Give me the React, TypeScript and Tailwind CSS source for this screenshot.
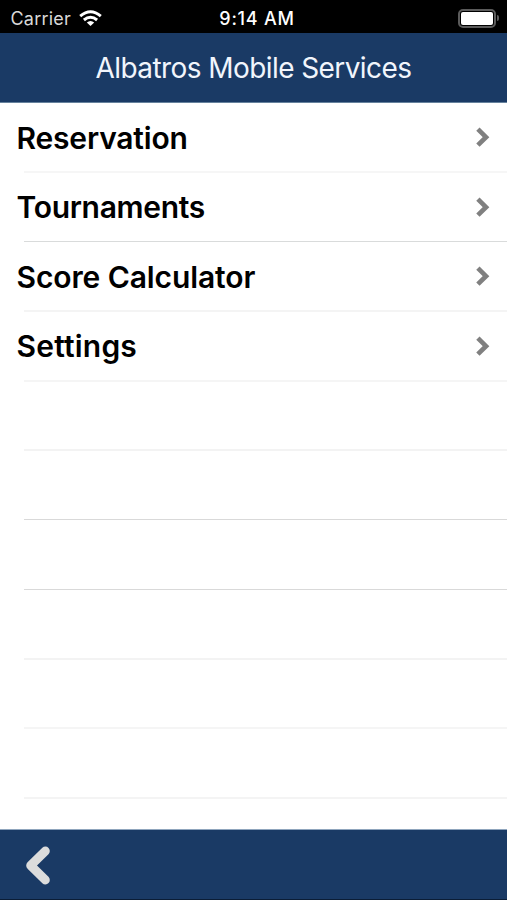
type Row = { label?: string; box: string; line: string };

const rows: Row[] = [
  { label: 'Reservation', box: 'h-[70px]', line: 'border-b-2 border-[#f6f6f6]' },
  { label: 'Tournaments', box: 'h-[69px]', line: 'border-b border-[#d9dbdb]' },
  { label: 'Score Calculator', box: 'h-[70px]', line: 'border-b-2 border-[#f4f4f4]' },
  { label: 'Settings', box: 'h-[70px]', line: 'border-b-2 border-[#f5f5f5]' },
  { box: 'h-[69px]', line: 'border-b-2 border-[#f3f3f3]' },
  { box: 'h-[69px]', line: 'border-b border-[#d9d9d9]' },
  { box: 'h-[70px]', line: 'border-b border-[#d9d9d9]' },
  { box: 'h-[70px]', line: 'border-b-2 border-[#f3f3f3]' },
  { box: 'h-[69px]', line: 'border-b-2 border-[#f5f5f5]' },
  { box: 'h-[70px]', line: 'border-b-2 border-[#f4f4f4]' },
];

const spacing: Record<string, string> = {
  Reservation: 'pt-[2px] tracking-[-0.18px]',
  Tournaments: 'tracking-[-0.3px]',
  'Score Calculator': 'pt-[2px] tracking-[-0.1px]',
  Settings: 'tracking-[0.2px]',
};

function StatusBar() {
  return (
    <div className="grid h-[33px] grid-cols-[1fr_auto_1fr] items-center bg-black pt-[3px] text-white">
      <div className="flex items-center pl-[10.5px]">
        <span className="pt-[2px] text-[18px] leading-[24px] tracking-[0.2px] text-[#d8d8d8]">Carrier</span>
        <svg className="ml-[8px] h-[17px] w-[23px]" viewBox="0 0 23 17" fill="none" stroke="#fff" strokeWidth="3">
          <path d="M1.2 6.1Q11.5 -2.5 21.8 6.1" />
          <path d="M4.9 10Q11.5 4.5 18.1 10" />
          <path d="M7.8 12.6Q11.5 9.6 15.2 12.6L11.5 16Z" fill="#fff" stroke="none" />
        </svg>
      </div>
      <span className="pl-[7px] pt-[2px] text-[18px] font-medium leading-[24px] tracking-[0.75px]">9:14 AM</span>
      <div className="flex items-center justify-end pr-[8px]">
        <div className="h-[19px] w-[38px] rounded-[5px] border-2 border-[#5b5b5b] p-px">
          <div className="h-full rounded-[2px] bg-white" />
        </div>
        <div className="ml-px h-[6px] w-[2px] rounded-r-full bg-[#5b5b5b]" />
      </div>
    </div>
  );
}

export default function App() {
  return (
    <div className="flex h-[900px] w-[507px] flex-col overflow-hidden bg-white font-['Inter','Liberation_Sans',sans-serif]">
      <StatusBar />
      <header className="flex h-[70px] items-center justify-center border-b border-[#66829d] bg-[#1a3a65]">
        <h1 className="whitespace-nowrap pt-px text-[28px] leading-[34px] tracking-[-0.58px] text-[#f1f5fc]">Albatros Mobile Services</h1>
      </header>
      <main className="flex-1">
        {rows.map((row, i) => (
          <div key={i} className={`pl-[24px] ${row.box}`}>
            <div className={`flex h-full items-center justify-between pr-[17px] ${row.line}`}>
              {row.label && (
                <>
                  <span className={`-ml-[7.5px] whitespace-nowrap text-[30px] font-semibold leading-[36px] text-black ${spacing[row.label]}`}>
                    {row.label}
                  </span>
                  <svg className="h-[20px] w-[14px]" viewBox="0 0 14 20" fill="none" stroke="#808080" strokeWidth="4.7">
                    <path d="M1.9 2.2L10 10.2L1.9 18.2" />
                  </svg>
                </>
              )}
            </div>
          </div>
        ))}
      </main>
      <footer className="flex h-[71px] items-center border-b border-t border-b-[#0b1d36] border-t-[#8fa5bd] bg-[#1a3a65] pl-[25px]">
        <svg className="h-[40px] w-[26px]" viewBox="0 0 26 40" fill="none" stroke="#dcdcdc" strokeWidth="8.8" strokeLinecap="round" strokeLinejoin="round">
          <path d="M20.4 6L5.6 20.5L20.4 35" />
        </svg>
      </footer>
    </div>
  );
}
